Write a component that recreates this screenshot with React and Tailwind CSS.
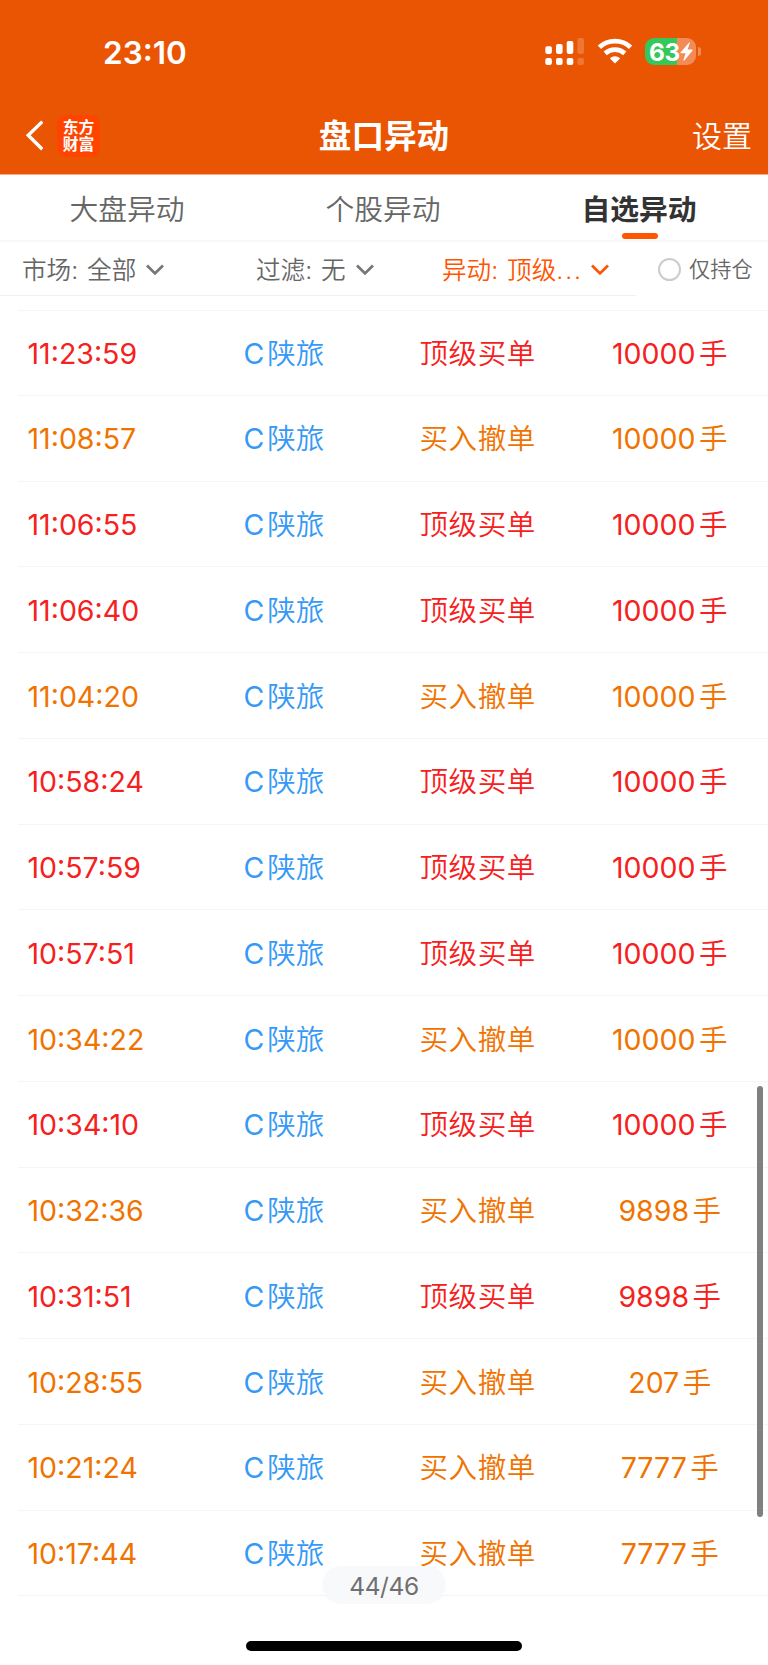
import clsx from 'clsx';

const BUY = '顶级买单';
const CANCEL = '买入撤单';

const records = [
  { time: '11:23:59', type: BUY, lots: '10000' },
  { time: '11:08:57', type: CANCEL, lots: '10000' },
  { time: '11:06:55', type: BUY, lots: '10000' },
  { time: '11:06:40', type: BUY, lots: '10000' },
  { time: '11:04:20', type: CANCEL, lots: '10000' },
  { time: '10:58:24', type: BUY, lots: '10000' },
  { time: '10:57:59', type: BUY, lots: '10000' },
  { time: '10:57:51', type: BUY, lots: '10000' },
  { time: '10:34:22', type: CANCEL, lots: '10000' },
  { time: '10:34:10', type: BUY, lots: '10000' },
  { time: '10:32:36', type: CANCEL, lots: '9898' },
  { time: '10:31:51', type: BUY, lots: '9898' },
  { time: '10:28:55', type: CANCEL, lots: '207' },
  { time: '10:21:24', type: CANCEL, lots: '7777' },
  { time: '10:17:44', type: CANCEL, lots: '7777' },
];

const tabs = ['大盘异动', '个股异动', '自选异动'];

const SignalIcon = () => (
  <svg width="40" height="28" viewBox="0 0 40 28" fill="white">
    <rect x="0.3" y="9.3" width="6.6" height="7.6" rx="1.8" />
    <rect x="11" y="7" width="6.6" height="9.9" rx="1.8" />
    <rect x="21.7" y="4" width="6.6" height="12.9" rx="1.8" />
    <rect x="32.4" y="1" width="6.6" height="15.9" rx="1.8" opacity="0.2" />
    <rect x="0.3" y="21" width="6.6" height="7" rx="2" />
    <rect x="11" y="21" width="6.6" height="7" rx="2" />
    <rect x="21.7" y="21" width="6.6" height="7" rx="2" />
    <rect x="32.4" y="21" width="6.6" height="7" rx="2" opacity="0.2" />
  </svg>
);

const WifiIcon = () => (
  <svg width="36" height="26" viewBox="0 0 36 26" fill="none" stroke="white" strokeWidth="4.8">
    <path d="M2.4 9.2C11 1.2 25 1.2 33.6 9.2" />
    <path d="M8.2 15.4C13.8 10.4 22.2 10.4 27.8 15.4" />
    <path d="M12.9 20.4C15.7 17.6 20.3 17.6 23.1 20.4L18 25.6Z" fill="white" stroke="none" />
  </svg>
);

const Battery = () => (
  <div className="flex items-center">
    <div className="flex h-[27px] w-[51px] items-center rounded-[9px] bg-[linear-gradient(90deg,#34c759_32px,#f28b55_32px)] pl-1">
      <span className="w-[31px] pt-px text-[24.5px] leading-[26px] font-bold tracking-[-0.4px]">63</span>
      <svg width="13" height="19" viewBox="0 0 13 19" fill="white">
        <path d="M9.2 0.4L0.5 10.4Q0.2 11.2 1 11.2H5.6L3.4 18.2Q3.6 19 4.3 18.4L12.6 8.4Q12.8 7.6 12 7.6H7.6L9.9 0.9Q9.8 0.1 9.2 0.4Z" />
      </svg>
    </div>
    <div className="ml-[2px] h-[9px] w-[3px] rounded-r-full bg-[#f28b55]" />
  </div>
);

const Chevron = ({ className }) => (
  <svg
    className={className}
    width="18"
    height="12"
    viewBox="0 0 18 12"
    fill="none"
    stroke="currentColor"
    strokeWidth="2.8"
  >
    <path d="M1 1.6L9 9.4L17 1.6" />
  </svg>
);

const Header = () => (
  <header className="h-[175px] border-b border-[#f5aa82] bg-[#ea5504] text-white">
    <div className="flex h-[98px] items-center pt-1 pl-[103px]">
      <span className="w-[442px] pt-[3px] text-[31.5px] font-semibold">23:10</span>
      <SignalIcon />
      <div className="ml-[11.5px]"><WifiIcon /></div>
      <div className="ml-[12.5px]"><Battery /></div>
    </div>
    <div className="grid h-[76px] grid-cols-3 items-center">
      <div className="flex items-center pl-[25px]">
        <svg width="18" height="32" viewBox="0 0 18 32" fill="none" stroke="white" strokeWidth="3.4">
          <path d="M17.3 1.6L3.2 15.2L17.3 29.2" />
        </svg>
        <div className="ml-[14px] flex h-[42px] w-[43px] flex-col justify-center rounded-[9px] bg-[#ff4400] text-center text-[15.8px] leading-[17.5px] font-bold">
          <span>东方</span>
          <span>财富</span>
        </div>
      </div>
      <h1 className="text-center text-[32.6px] font-semibold">盘口异动</h1>
      <span className="pr-[16px] text-right text-[30px] font-[350]">设置</span>
    </div>
  </header>
);

const Tabs = () => (
  <nav className="grid h-[67px] grid-cols-3 border-b-2 border-[#f7f7f7]">
    {tabs.map((tab, i) => (
      <div
        key={tab}
        className={clsx(
          'flex flex-col items-center pt-[14px] pr-[2px] text-[28.8px] leading-[42px]',
          i === 2 ? 'font-semibold text-[#333]' : 'font-[350] text-[#666]'
        )}
      >
        {tab}
        {i === 2 && <span className="mt-[2px] ml-[2px] h-[6px] w-9 rounded-full bg-[#ff5500]" />}
      </div>
    ))}
  </nav>
);

const Filters = () => (
  <div className="flex h-[54px] text-[24.6px] font-[350] text-[#666]">
    <div className="flex w-[636px] items-center border-b border-[#f0f0f0] pl-[22px]">
      <div className="flex w-[234px] items-center">
        <span className="pt-[4px] [word-spacing:2px]">市场: 全部</span>
        <Chevron className="mt-[3px] ml-[10px] text-[#777]" />
      </div>
      <div className="flex w-[186px] items-center">
        <span className="pt-[4px] [word-spacing:2px]">过滤: 无</span>
        <Chevron className="mt-[3px] ml-[10px] text-[#777]" />
      </div>
      <div className="flex items-center text-[#ff5500]">
        <span className="pt-[4px] [word-spacing:2px]">
          异动: 顶级<span className="tracking-[2px]">...</span>
        </span>
        <Chevron className="mt-[3px] ml-[8px]" />
      </div>
    </div>
    <div className="flex items-center pl-[22px] text-[21.2px]">
      <span className="mr-[8px] size-[23px] rounded-full border-2 border-[#ccc]" />
      <span className="pt-[2px]">仅持仓</span>
    </div>
  </div>
);

const Row = ({ time, type, lots }) => (
  <div
    className={clsx(
      'grid h-[85.75px] grid-cols-[216px_176px_148px_1fr] items-center border-b border-[#f5f5f5] pt-[3px] pl-[9.5px] text-[28.5px] font-[350]',
      type === BUY ? 'text-[#f52020]' : 'text-[#f07300]'
    )}
  >
    <span className="font-[375]">{time}</span>
    <span className="text-[#3599f5]">
      <span className="mr-[3px] font-[375]">C</span>陕旅
    </span>
    <span className="tracking-[0.6px]">{type}</span>
    <span className="pl-[4px] text-center">
      <span className="mr-[3.5px] font-[375]">{lots}</span>手
    </span>
  </div>
);

export default function App() {
  return (
    <div className="relative h-[1665px] w-[768px] overflow-hidden bg-white font-['Inter','Noto_Sans_CJK_SC',sans-serif]">
      <Header />
      <Tabs />
      <Filters />
      <main className="mt-[14px] ml-[18px] border-t border-[#f5f5f5]">
        <div className="-mt-[0.8px]">
          {records.map((record) => (
            <Row key={record.time} {...record} />
          ))}
        </div>
      </main>

      {/* Scrollbar */}
      <div className="absolute top-[1086px] right-[5px] h-[431px] w-[6px] rounded-full bg-[#808080]" />

      {/* Page counter */}
      <div className="absolute top-[1566px] left-[322px] flex h-[38px] w-[124px] items-center justify-center rounded-full bg-[#f8f9fb]/95 pt-[3px] text-[24.5px] tracking-[-0.4px] text-[#707070]">
        44/46
      </div>

      {/* Home indicator */}
      <div className="absolute bottom-[14px] left-[246px] h-[10px] w-[276px] rounded-full bg-black" />
    </div>
  );
}
